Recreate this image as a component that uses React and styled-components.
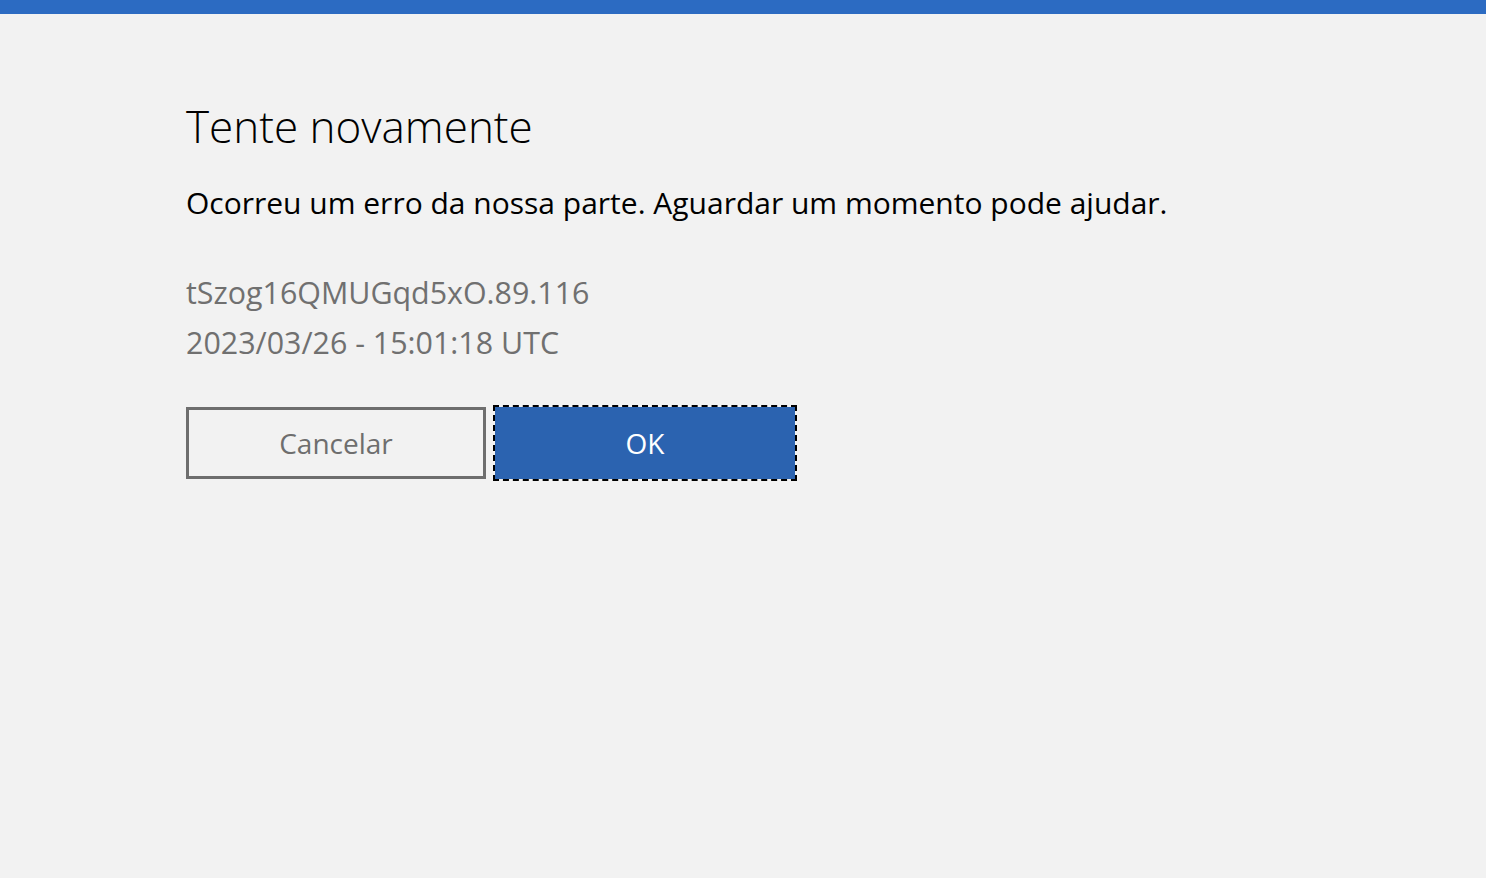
import React from 'react'
import styled, { createGlobalStyle } from 'styled-components'

const GlobalStyle = createGlobalStyle`
    html, body {
        margin: 0;
        padding: 0;
        background: #f2f2f2;
    }
    body {
        font-family: "Open Sans", "Noto Sans", "Liberation Sans", sans-serif;
    }
`

function App() {
    return (
        <Page>
            <GlobalStyle />
            <TopBar />
            <Content>
                <Title>Tente novamente</Title>
                <Message>Ocorreu um erro da nossa parte. Aguardar um momento pode ajudar.</Message>
                <Details>
                    <DetailLine>tSzog16QMUGqd5xO.89.116</DetailLine>
                    <DetailLine>2023/03/26 - 15:01:18 UTC</DetailLine>
                </Details>
                <ButtonRow>
                    <Button>Cancelar</Button>
                    <Button primary>OK</Button>
                </ButtonRow>
            </Content>
        </Page>
    )
}

export default App

const Page = styled.div`
    min-height: 100vh;
    background: #f2f2f2;
`

const TopBar = styled.div`
    height: 14px;
    background: #2c6bc2;
`

const Content = styled.div`
    padding: 86px 0 0 186px;
    display: flex;
    flex-direction: column;
    align-items: flex-start;
`

const Title = styled.h1`
    margin: 0;
    font-size: 44px;
    font-weight: 300;
    line-height: 52px;
    color: #000;
`

const Message = styled.p`
    margin: 31px 0 0;
    font-size: 30px;
    line-height: 40px;
    color: #000;
`

const Details = styled.div`
    margin-top: 45px;
    display: flex;
    flex-direction: column;
`

const DetailLine = styled.div`
    font-size: 30.4px;
    line-height: 50px;
    color: #707070;
`

const ButtonRow = styled.div`
    margin-top: 39px;
    display: flex;
    gap: 9px;
`

const Button = styled.button`
    box-sizing: border-box;
    width: 300px;
    height: 72px;
    font-family: inherit;
    font-size: 28px;
    cursor: pointer;
    border: 3px solid ${p => (p.primary ? '#2b63b0' : '#6e6e6e')};
    background: ${p => (p.primary ? '#2b63b0' : 'transparent')};
    color: ${p => (p.primary ? '#ffffff' : '#6e6e6e')};
    outline: ${p => (p.primary ? '2px dashed #000' : 'none')};
    outline-offset: 0;
`
